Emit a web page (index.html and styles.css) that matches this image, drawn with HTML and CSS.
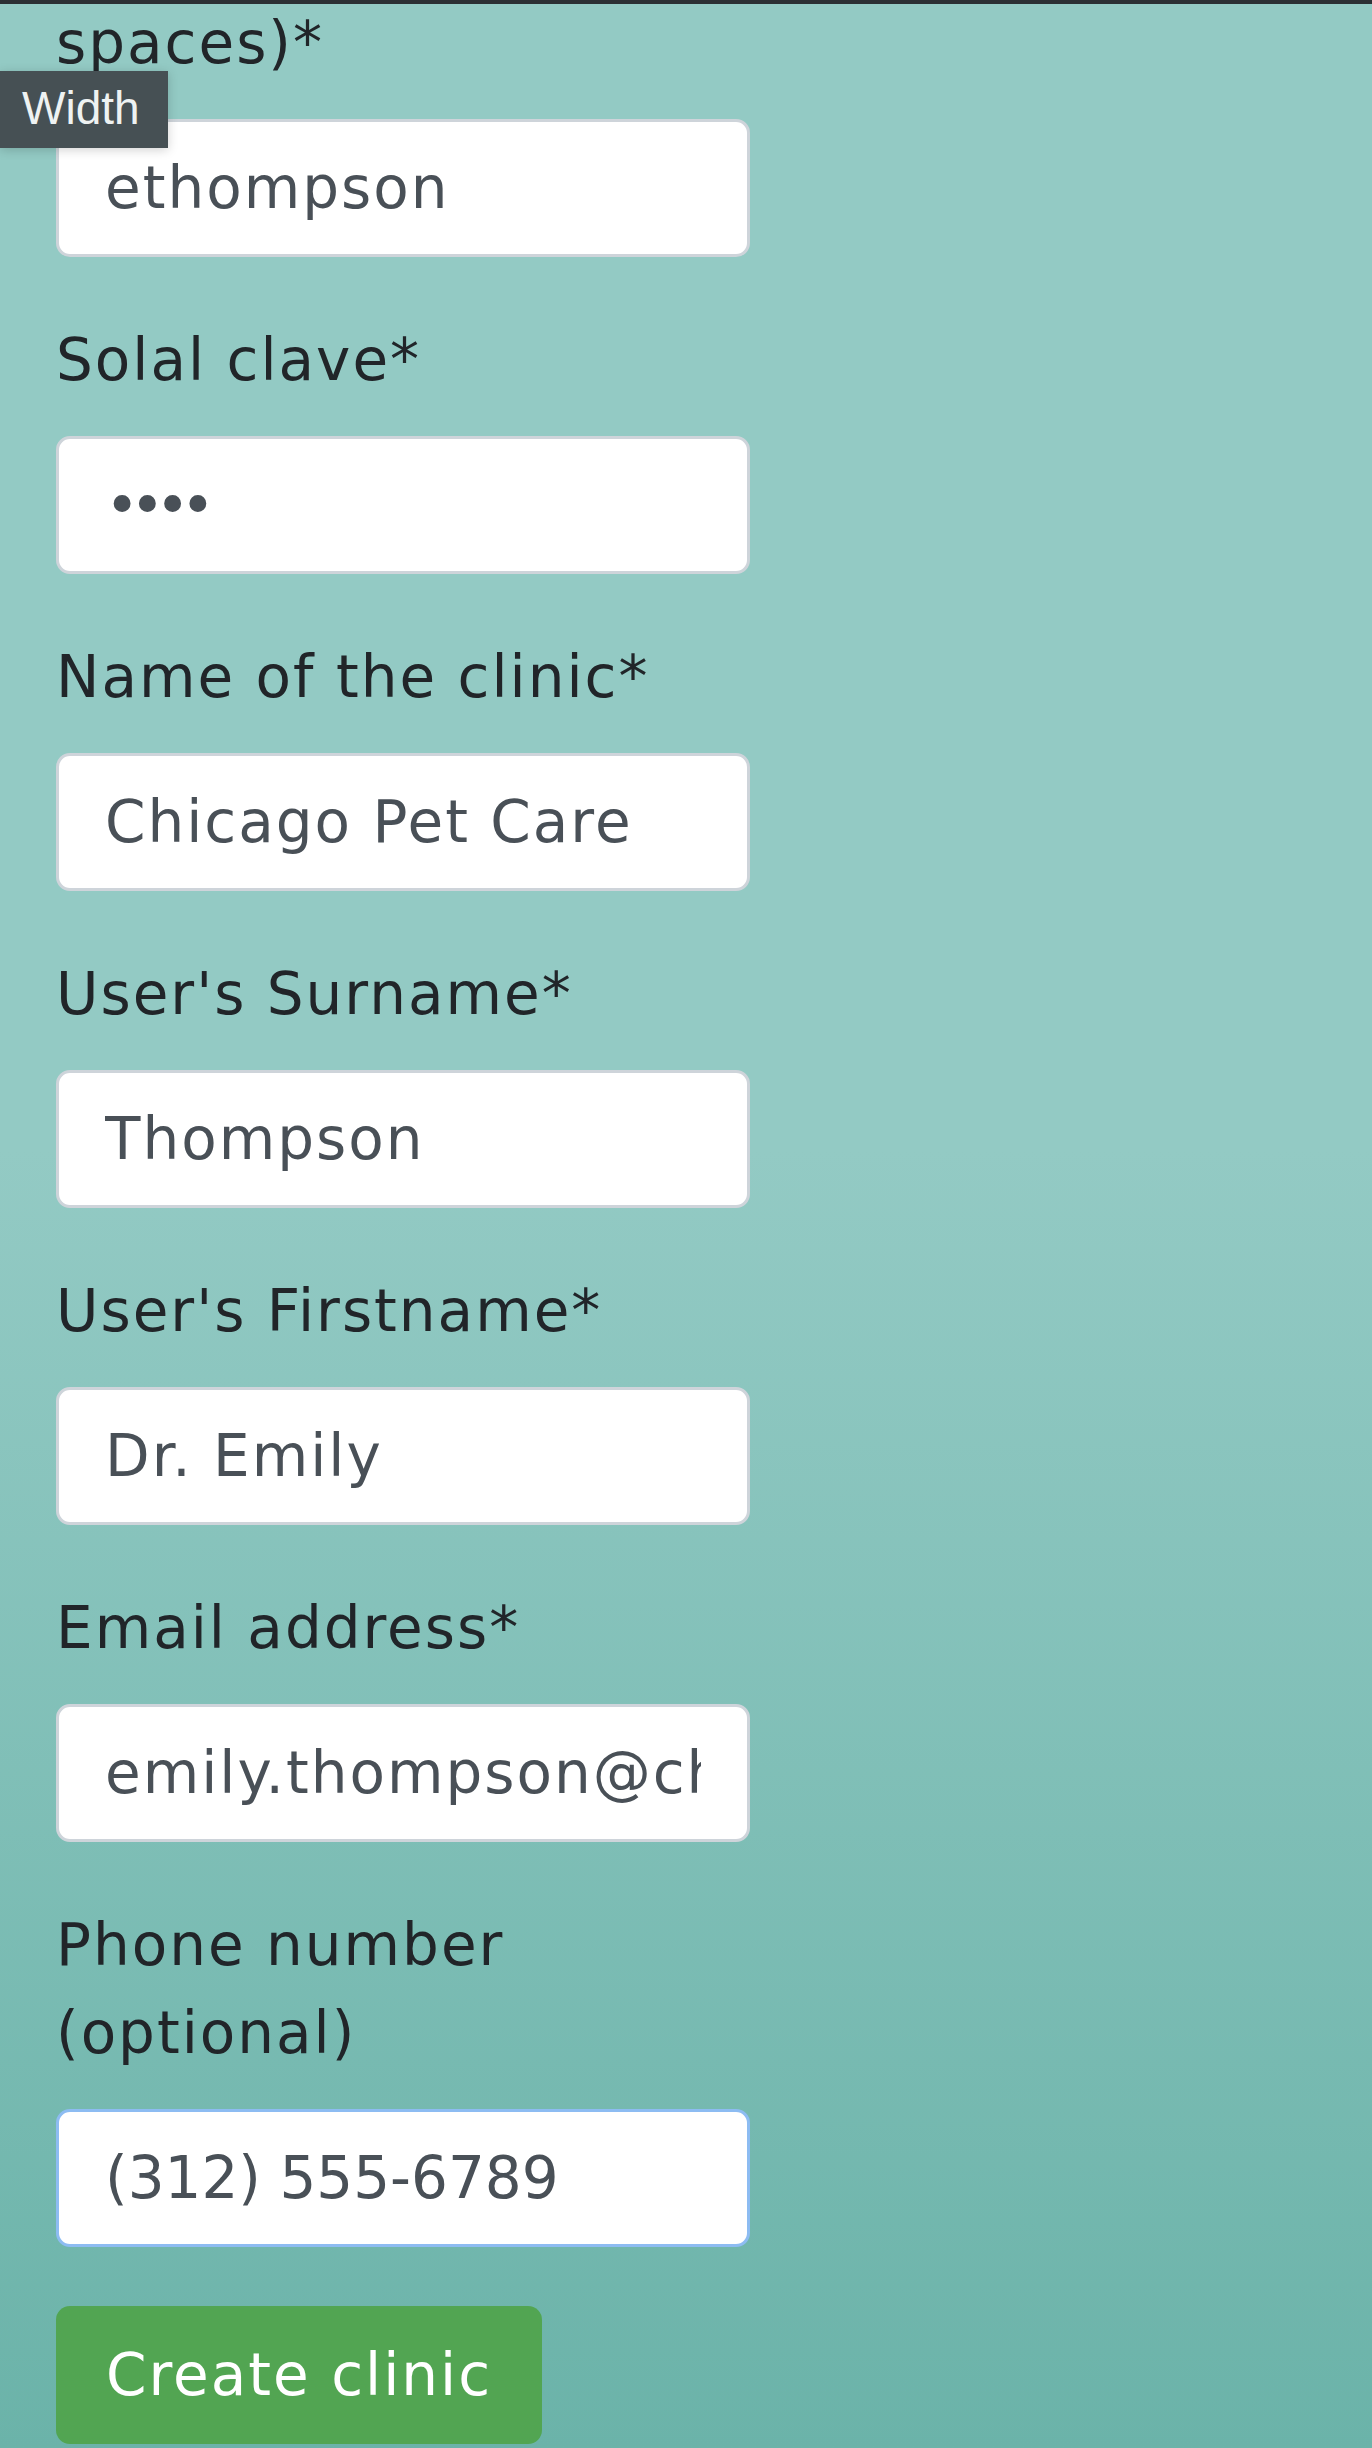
FILE: index.html
```html
<!DOCTYPE html>
<html lang="en">
<head>
    <meta charset="UTF-8">
    <meta name="viewport" content="width=device-width, initial-scale=1.0">
    <title>New clinic</title>
    <link rel="stylesheet" href="styles.css">
</head>
<body>
    <div class="window-edge"></div>
    <div class="size-tip">Width</div>

    <div class="container">
        <form id="clinicForm" class="clinic-form" method="post">
            <div class="form-group">
                <label for="login">spaces)*</label>
                <input type="text" id="login" class="form-control" value="ethompson" required>
            </div>

            <div class="form-group">
                <label for="password">Solal clave*</label>
                <input type="password" id="password" class="form-control" value="1234" required>
            </div>

            <div class="form-group">
                <label for="clinicName">Name of the clinic*</label>
                <input type="text" id="clinicName" class="form-control" value="Chicago Pet Care" required>
            </div>

            <div class="form-group">
                <label for="surname">User's Surname*</label>
                <input type="text" id="surname" class="form-control" value="Thompson" required>
            </div>

            <div class="form-group">
                <label for="firstname">User's Firstname*</label>
                <input type="text" id="firstname" class="form-control" value="Dr. Emily" required>
            </div>

            <div class="form-group">
                <label for="email">Email address*</label>
                <input type="email" id="email" class="form-control" value="emily.thompson@chicagopetcare.com" required>
            </div>

            <div class="form-group">
                <label for="phone">Phone number (optional)</label>
                <input type="tel" id="phone" class="form-control focused" value="(312) 555-6789">
            </div>

            <button type="submit" class="btn btn-success">Create clinic</button>
        </form>
    </div>
</body>
</html>
```

FILE: styles.css
```css
:root {
    --text: #212529;
    --field-text: #495057;
    --field-border: #ced4da;
    --focus: #8dbcf2;
    --success: #52a552;
}

* {
    margin: 0;
    padding: 0;
    box-sizing: border-box;
}

html,
body {
    min-height: 100%;
}

body {
    font-family: 'DejaVu Sans', 'Noto Sans', sans-serif;
    font-size: 58px;
    line-height: 88px;
    letter-spacing: 2px;
    color: var(--text);
    background: linear-gradient(to bottom, #93cac4 0, #93cac4 1150px, #6bb3a9 2448px);
    min-height: 2448px;
}

/* thin dark strip of the browser frame over the page */
.window-edge {
    position: fixed;
    top: 0;
    left: 0;
    right: 0;
    height: 4px;
    background-color: #2b3034;
    z-index: 10;
}

/* size hint floating over the form */
.size-tip {
    position: absolute;
    top: 71px;
    left: 0;
    width: 168px;
    height: 77px;
    padding-left: 22px;
    background-color: #465054;
    color: #eef2f2;
    font-family: 'Liberation Sans', Arial, sans-serif;
    font-size: 46px;
    line-height: 75px;
    letter-spacing: 0;
    box-shadow: 0 2px 10px rgba(0, 0, 0, 0.18);
    z-index: 5;
}

.container {
    margin-top: -1px;
    padding-left: 56px;
}

.clinic-form {
    width: 694px;
}

.form-group {
    margin-bottom: 59px;
}

.form-group label {
    display: block;
    margin-bottom: 32px;
}

.form-control {
    display: block;
    width: 100%;
    height: 138px;
    padding: 0 46px;
    border: 3px solid var(--field-border);
    border-radius: 14px;
    background-color: white;
    color: var(--field-text);
    font-family: inherit;
    font-size: 58px;
    letter-spacing: 2px;
    outline: none;
}

.form-control[type="password"] {
    letter-spacing: -9px;
}

.form-control[type="tel"] {
    letter-spacing: 0;
}

.form-control.focused {
    border-color: var(--focus);
}

.btn {
    display: inline-block;
    height: 138px;
    padding: 0 47px;
    border: 3px solid transparent;
    border-radius: 14px;
    font-family: inherit;
    font-size: 58px;
    letter-spacing: 2px;
    cursor: pointer;
}

.btn-success {
    background-color: var(--success);
    color: white;
}
```
